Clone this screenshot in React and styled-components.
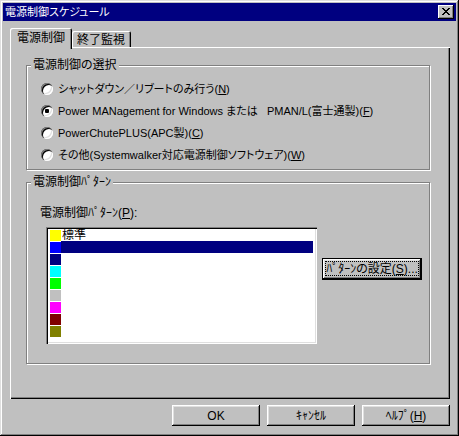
import React from 'react'
import styled, { createGlobalStyle } from 'styled-components'

const GlobalStyle = createGlobalStyle`
  html, body { margin:0; padding:0; background:#c0c0c0; }
  body {
    font-family:"Liberation Sans", "Noto Sans CJK JP", sans-serif;
    font-size:12px;
    color:#000;
  }
`

const Window = styled.div`
  width:459px;
  height:436px;
  box-sizing:border-box;
  padding:3px;
  background:#c0c0c0;
  box-shadow:inset -1px -1px #000, inset 1px 1px #dfdfdf, inset -2px -2px #808080, inset 2px 2px #fff;
  display:flex;
  flex-direction:column;
  font-feature-settings:"palt" 1;
`

const Half = styled.span`
  font-feature-settings:normal;
`

const TitleBar = styled.div`
  height:18px;
  background:#000080;
  color:#fff;
  display:flex;
  align-items:center;
  justify-content:space-between;
  padding:0 2px;
  font-size:11px;
  line-height:12px;
`

const CloseBtn = styled.div`
  width:16px;
  height:14px;
  box-sizing:border-box;
  background:#c0c0c0;
  box-shadow:inset -1px -1px #000, inset 1px 1px #fff, inset -2px -2px #808080;
  display:flex;
  align-items:center;
  justify-content:center;
  padding:0 1px 1px 0;
`

const Body = styled.div`
  flex:1;
  padding:7px 6px 0 7px;
  display:flex;
  flex-direction:column;
`

const TabRow = styled.div`
  display:flex;
  align-items:flex-end;
  height:20px;
  margin-bottom:-1px;
`

const Tab = styled.div`
  position:relative;
  z-index:${p => (p.$active ? 1 : 0)};
  height:${p => (p.$active ? 21 : 16)}px;
  margin-bottom:${p => (p.$active ? -1 : 1)}px;
  padding:${p => (p.$active ? '0 7px 1px 7px' : '2px 6px 0 5px')};
  box-sizing:border-box;
  display:flex;
  align-items:center;
  background:#c0c0c0;
  border-radius:2px 2px 0 0;
  box-shadow:inset 1px 1px #fff, inset -1px 0 #000, inset -2px 0 #808080;
  line-height:12px;
`

const Panel = styled.div`
  height:352px;
  box-sizing:border-box;
  box-shadow:inset 1px 1px #fff, inset -1px -1px #000, inset -2px -2px #808080;
  padding:18px 0 0 16px;
  display:flex;
  flex-direction:column;
`

const Group = styled.div`
  width:404px;
  height:${p => p.$h}px;
  margin-top:${p => p.$mt || 0}px;
  box-sizing:border-box;
  border:1px solid #808080;
  box-shadow:inset 1px 1px #fff, 1px 1px #fff;
  display:flex;
  flex-direction:column;
  align-items:flex-start;
`

const Legend = styled.div`
  margin:-7px 0 0 4px;
  padding:0 2px;
  height:12px;
  line-height:12px;
  background:#c0c0c0;
  white-space:nowrap;
`

const RadioList = styled.div`
  display:flex;
  flex-direction:column;
  gap:10px;
  padding:12px 0 0 14px;
`

const RadioRow = styled.div`
  display:flex;
  align-items:center;
  gap:5px;
  height:12px;
  font-size:11px;
  line-height:12px;
  white-space:pre;
`

const RadioDot = styled.span`
  width:12px;
  height:12px;
  border-radius:50%;
  background:#fff;
  box-shadow:inset 1px 1px #808080, inset 2px 2px #000, inset -1px -1px #fff, inset -2px -2px #dfdfdf;
  display:flex;
  align-items:center;
  justify-content:center;
  flex:none;

  &::after {
    content:"";
    width:4px;
    height:4px;
    border-radius:1px;
    background:${p => (p.$on ? '#000' : 'transparent')};
  }
`

const FieldLabel = styled.div`
  margin:19px 0 0 13px;
  line-height:12px;
  height:12px;
`

const ListRow = styled.div`
  display:flex;
  align-items:flex-start;
  margin:8px 0 0 19px;
`

const ListBox = styled.div`
  width:271px;
  height:117px;
  box-sizing:border-box;
  padding:2px;
  background:#fff;
  box-shadow:inset 1px 1px #808080, inset 2px 2px #000, inset -1px -1px #fff, inset -2px -2px #dfdfdf;
  display:flex;
  flex-direction:column;
`

const Item = styled.div`
  display:flex;
  height:12px;
`

const Swatch = styled.span`
  width:11px;
  height:11px;
  margin:1px 0 0 2px;
  background:${p => p.$c};
  flex:none;
`

const ItemText = styled.span`
  flex:1;
  margin-right:2px;
  padding-left:1px;
  line-height:12px;
  background:${p => (p.$sel ? '#000080' : 'transparent')};
  color:${p => (p.$sel ? '#fff' : '#000')};
`

const Button = styled.button`
  width:${p => p.$w || 88}px;
  height:${p => p.$h || 21}px;
  margin:${p => p.$m || 0};
  padding:0;
  box-sizing:border-box;
  border:${p => (p.$default ? '1px solid #000' : 'none')};
  background:#c0c0c0;
  color:#000;
  font:inherit;
  line-height:12px;
  white-space:nowrap;
  box-shadow:inset -1px -1px #000, inset 1px 1px #fff, inset -2px -2px #808080, inset 2px 2px #dfdfdf;
  display:flex;
  align-items:center;
  justify-content:center;
  flex:none;
`

const FocusRect = styled.span`
  flex:1;
  align-self:stretch;
  margin:2px 3px 3px 3px;
  border:1px dotted #000;
  display:flex;
  align-items:center;
  justify-content:center;
`

const ButtonRow = styled.div`
  display:flex;
  justify-content:flex-end;
  gap:7px;
  margin-top:6px;
`

const closeGlyph = [
  'XX....XX',
  '.XX..XX.',
  '..XXXX..',
  '...XX...',
  '..XXXX..',
  '.XX..XX.',
  'XX....XX',
]

const CloseIcon = () => (
  <svg width="8" height="7" viewBox="0 0 8 7" shapeRendering="crispEdges">
    {closeGlyph.map((row, y) =>
      row.split('').map((c, x) =>
        c === 'X' ? <rect key={x + '-' + y} x={x} y={y} width="1" height="1" fill="#000" /> : null
      )
    )}
  </svg>
)

const options = [
  { label: 'シャットダウン／リブートのみ行う(', key: 'N', tail: ')' },
  { label: 'Power MANagement for Windows または   PMAN/L(富士通製)(', key: 'F', tail: ')', on: true },
  { label: 'PowerChutePLUS(APC製)(', key: 'C', tail: ')' },
  { label: 'その他(Systemwalker対応電源制御ソフトウェア)(', key: 'W', tail: ')' },
]

const patterns = [
  { color: '#ffff00', text: '標準' },
  { color: '#0000ff', text: '', sel: true },
  { color: '#000080', text: '' },
  { color: '#00ffff', text: '' },
  { color: '#00ff00', text: '' },
  { color: '#c0c0c0', text: '' },
  { color: '#ff00ff', text: '' },
  { color: '#800000', text: '' },
  { color: '#808000', text: '' },
]

const App = () => {
  return (
    <>
      <GlobalStyle />
      <Window>
        <TitleBar>
          <span>電源制御スケジュール</span>
          <CloseBtn><CloseIcon /></CloseBtn>
        </TitleBar>
        <Body>
          <TabRow>
            <Tab $active>電源制御</Tab>
            <Tab>終了監視</Tab>
          </TabRow>
          <Panel>
            <Group $h={105}>
              <Legend>電源制御の選択</Legend>
              <RadioList>
                {options.map(o => (
                  <RadioRow key={o.key}>
                    <RadioDot $on={o.on} />
                    <span>{o.label}<u>{o.key}</u>{o.tail}</span>
                  </RadioRow>
                ))}
              </RadioList>
            </Group>
            <Group $h={182} $mt={12}>
              <Legend>電源制御<Half>ﾊﾟﾀｰﾝ</Half></Legend>
              <FieldLabel>電源制御<Half>ﾊﾟﾀｰﾝ</Half>(<u>P</u>):</FieldLabel>
              <ListRow>
                <ListBox>
                  {patterns.map((p, i) => (
                    <Item key={i}>
                      <Swatch $c={p.color} />
                      <ItemText $sel={p.sel}>{p.text}</ItemText>
                    </Item>
                  ))}
                </ListBox>
                <Button $default $w={100} $h={22} $m="31px 0 0 5px">
                  <FocusRect><Half>ﾊﾟﾀｰﾝ</Half>の設定(<u>S</u>)...</FocusRect>
                </Button>
              </ListRow>
            </Group>
          </Panel>
          <ButtonRow>
            <Button>OK</Button>
            <Button><Half>ｷｬﾝｾﾙ</Half></Button>
            <Button><Half>ﾍﾙﾌﾟ</Half>(<u>H</u>)</Button>
          </ButtonRow>
        </Body>
      </Window>
    </>
  )
}

export default App
